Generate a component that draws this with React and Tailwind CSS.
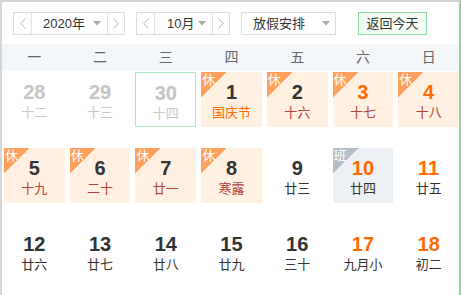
import React from "react";

const FONT = { fontFamily: '"Liberation Sans", Arial, "Noto Sans CJK SC", sans-serif' };

function Chevron({ dir }) {
  return (
    <svg width="6" height="11" viewBox="0 0 6 11">
      <polyline
        points={dir === "l" ? "5.5,0.5 0.8,5.5 5.5,10.5" : "0.5,0.5 5.2,5.5 0.5,10.5"}
        fill="none"
        stroke="#b5b5b5"
        strokeWidth="1"
      />
    </svg>
  );
}

function Caret() {
  return (
    <svg width="8" height="5" viewBox="0 0 8 5">
      <polygon points="0,0 8,0 4,4.5" fill="#a8a8a8" />
    </svg>
  );
}

function Stepper({ label, labelW, padL }) {
  return (
    <div className="flex h-[23px] border border-[#dcdcdc] bg-white">
      <div className="flex w-[18px] items-center justify-center border-r border-[#e2e2e2]">
        <Chevron dir="l" />
      </div>
      <div className={`flex items-center justify-between pr-[6px] ${labelW} ${padL}`}>
        <span className="text-[13px] text-[#333]">{label}</span>
        <Caret />
      </div>
      <div className="flex w-[17px] items-center justify-center border-l border-[#e2e2e2]">
        <Chevron dir="r" />
      </div>
    </div>
  );
}

const rows = [
  [
    { n: 28, l: "十二", other: true },
    { n: 29, l: "十三", other: true },
    { n: 30, l: "十四", other: true, today: true },
    { n: 1, l: "国庆节", hol: true, fest: true },
    { n: 2, l: "十六", hol: true },
    { n: 3, l: "十七", hol: true, we: true },
    { n: 4, l: "十八", hol: true, we: true },
  ],
  [
    { n: 5, l: "十九", hol: true },
    { n: 6, l: "二十", hol: true },
    { n: 7, l: "廿一", hol: true },
    { n: 8, l: "寒露", hol: true },
    { n: 9, l: "廿三" },
    { n: 10, l: "廿四", work: true, we: true },
    { n: 11, l: "廿五", we: true },
  ],
  [
    { n: 12, l: "廿六" },
    { n: 13, l: "廿七" },
    { n: 14, l: "廿八" },
    { n: 15, l: "廿九" },
    { n: 16, l: "三十" },
    { n: 17, l: "九月小", we: true },
    { n: 18, l: "初二", we: true },
  ],
];

function Cell({ d }) {
  let bg = "bg-white";
  if (d.hol) bg = "bg-[#fff0e1]";
  if (d.work) bg = "bg-[#edf1f5]";
  const border = d.today ? "border border-[#aee6c2]" : "";
  let numColor = "text-[#333]";
  if (d.other) numColor = "text-[#c4c4c4]";
  else if (d.we) numColor = "text-[#ff6a00]";
  let lunColor = "text-[#333]";
  if (d.other) lunColor = "text-[#c8c8c8]";
  else if (d.fest) lunColor = "text-[#ff6a00]";
  else if (d.hol) lunColor = "text-[#b0403a]";
  return (
    <div className={`relative flex h-[55px] flex-col items-center pt-[9px] ${bg} ${border} ${d.today ? "pt-[8px]" : ""}`}>
      {d.hol && (
        <div className="absolute left-0 top-0 h-[26px] w-[25px] bg-[linear-gradient(to_bottom_right,#ffa05c_50%,transparent_50%)]">
          <span className="absolute left-[1px] top-[1px] text-[13px] leading-[14px] text-white">休</span>
        </div>
      )}
      {d.work && (
        <div className="absolute left-0 top-0 h-[26px] w-[25px] bg-[linear-gradient(to_bottom_right,#b5bdc5_50%,transparent_50%)]">
          <span className="absolute left-[1px] top-[1px] text-[13px] leading-[14px] text-white">班</span>
        </div>
      )}
      <div className={`text-[20px] font-bold leading-[22px] ${numColor}`}>{d.n}</div>
      <div className={`mt-[2px] text-[13px] leading-[16px] ${lunColor}`}>{d.l}</div>
    </div>
  );
}

export default function App() {
  const week = ["一", "二", "三", "四", "五", "六", "日"];
  return (
    <div style={FONT} className="h-[295px] w-[461px] overflow-hidden bg-white">
      <div className="h-full border-l-2 border-r-2 border-t-2 border-l-[#d6d6d6] border-r-[#86d9a2] border-t-[#d6d6d6]">
        <div className="flex h-[42px] items-start pl-[11px] pt-[10px]">
          <Stepper label="2020年" labelW="w-[75px]" padL="pl-[11px]" />
          <div className="ml-[11px]">
            <Stepper label="10月" labelW="w-[57px]" padL="pl-[12px]" />
          </div>
          <div className="ml-[11px] flex h-[23px] w-[95px] items-center justify-between border border-[#dcdcdc] pl-[11px] pr-[5px]">
            <span className="text-[13px] text-[#333]">放假安排</span>
            <Caret />
          </div>
          <div className="ml-[22px] flex h-[23px] w-[69px] items-center justify-center border border-[#8adba4] bg-[#f4fcf6] text-[13px] text-[#333]">
            返回今天
          </div>
        </div>
        <div className="grid h-[27px] grid-cols-7 gap-x-[5px] bg-[#f3f7f9] pl-[2px]">
          {week.map((w) => (
            <div key={w} className="flex items-center justify-center text-[14px] text-[#666]">
              {w}
            </div>
          ))}
        </div>
        <div className="grid grid-cols-7 gap-x-[5px] gap-y-[21px] pl-[2px] pt-[1px]">
          {rows.flat().map((d, i) => (
            <Cell key={i} d={d} />
          ))}
        </div>
      </div>
    </div>
  );
}
